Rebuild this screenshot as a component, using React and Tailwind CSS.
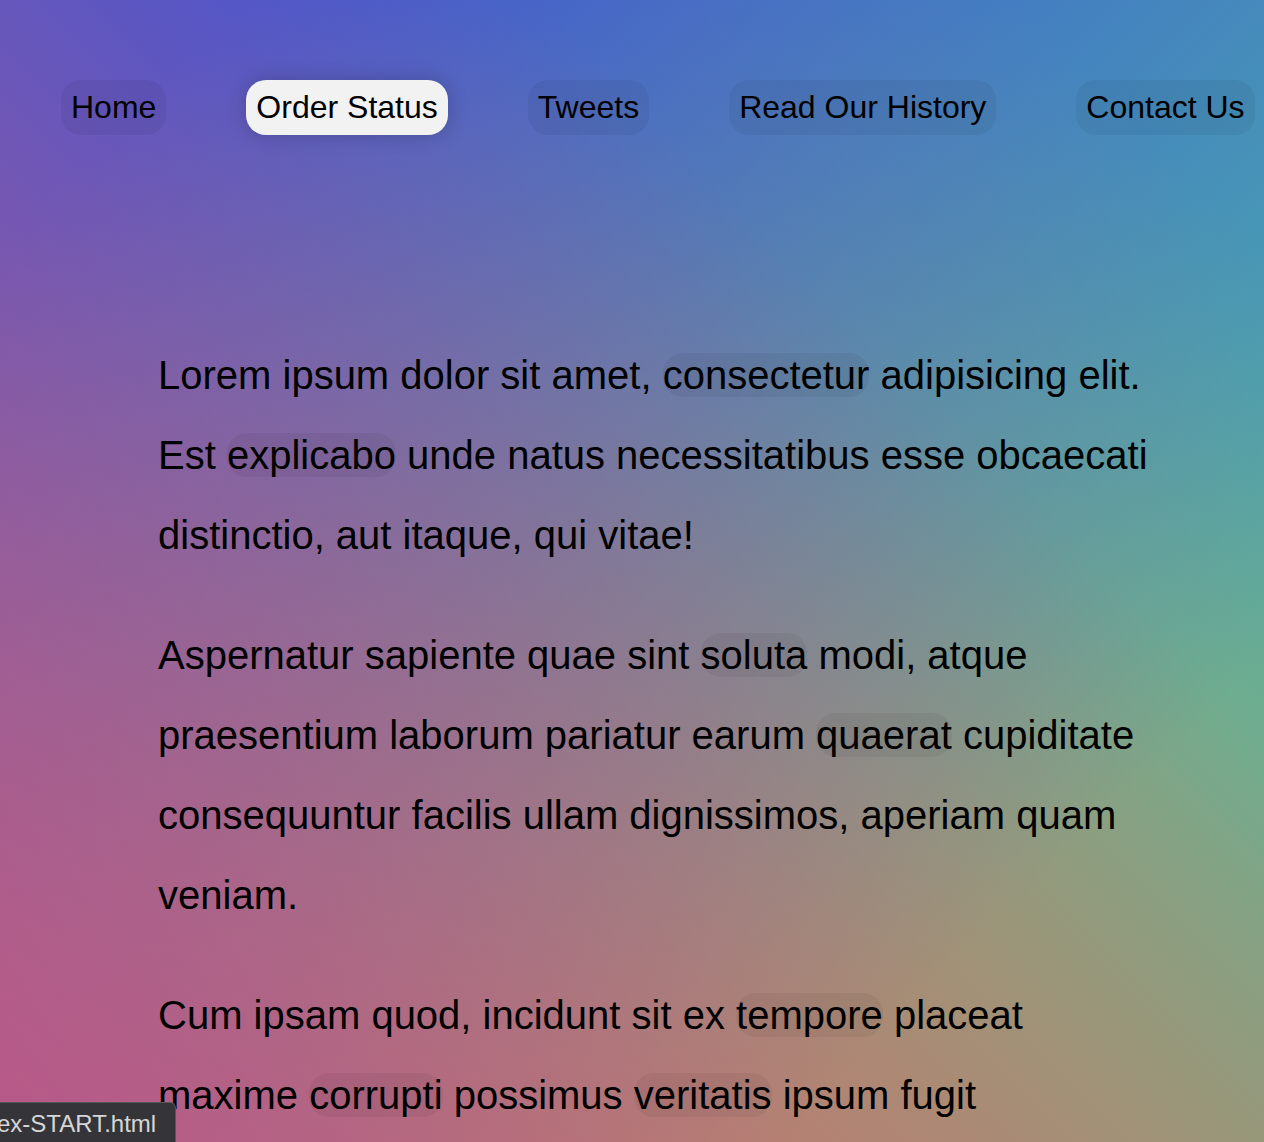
const links = ['Home', 'Order Status', 'Tweets', 'Read Our History', 'Contact Us']

function Hl({ children }) {
  return <a href="#" className="rounded-[20px] bg-black/5 text-black">{children}</a>
}

export default function App() {
  return (
    <div className="relative h-[1142px] w-full overflow-hidden bg-[#c6ae48] bg-[linear-gradient(45deg,rgba(185,88,136,1)_0%,rgba(185,88,136,0)_70%),linear-gradient(135deg,rgba(62,86,212,1)_10%,rgba(62,86,212,0)_80%),linear-gradient(225deg,rgba(74,172,172,1)_10%,rgba(74,172,172,0)_80%)] font-['Liberation_Sans',Arial,sans-serif] text-black">
      <nav>
        <ul className="flex whitespace-nowrap pl-[21px] pt-[80px]">
          {links.map(l => (
            <li key={l}>
              <a
                href="#"
                className={`mx-[40px] inline-block rounded-[20px] p-[10px] text-[32px] leading-[35px] text-black ${l === 'Order Status' ? 'bg-[#f2f2f2] shadow-[0_0_20px_rgba(0,0,0,0.2)]' : 'bg-black/5'}`}
              >
                {l}
              </a>
            </li>
          ))}
        </ul>
      </nav>

      <div className="ml-[158px] mt-[200px] flex w-[1000px] flex-col gap-[40px] text-[40px] leading-[80px]">
        <p>
          Lorem ipsum dolor sit amet, <Hl>consectetur</Hl> adipisicing elit. Est <Hl>explicabo</Hl> unde natus
          necessitatibus esse obcaecati distinctio, aut itaque, qui vitae!
        </p>
        <p>
          Aspernatur sapiente quae sint <Hl>soluta</Hl> modi, atque praesentium laborum pariatur earum{' '}
          <Hl>quaerat</Hl> cupiditate consequuntur facilis ullam dignissimos, aperiam quam veniam.
        </p>
        <p>
          Cum ipsam quod, incidunt sit ex <Hl>tempore</Hl> placeat maxime <Hl>corrupti</Hl> possimus{' '}
          <Hl>veritatis</Hl> ipsum fugit recusandae est doloremque? Hic, <Hl>quibusdam</Hl>, nulla.
        </p>
      </div>

      {/* browser status bubble */}
      <div className="absolute bottom-0 left-0 flex h-[40px] w-[176px] items-center rounded-tr-[6px] border-r border-t border-[#55555a] bg-[#353539] pt-[3px] font-['Liberation_Sans',Arial,sans-serif] text-[24px] text-[#d6d6d6]">
        <span className="-ml-[3px] whitespace-nowrap">ex-START.html</span>
      </div>
    </div>
  )
}
